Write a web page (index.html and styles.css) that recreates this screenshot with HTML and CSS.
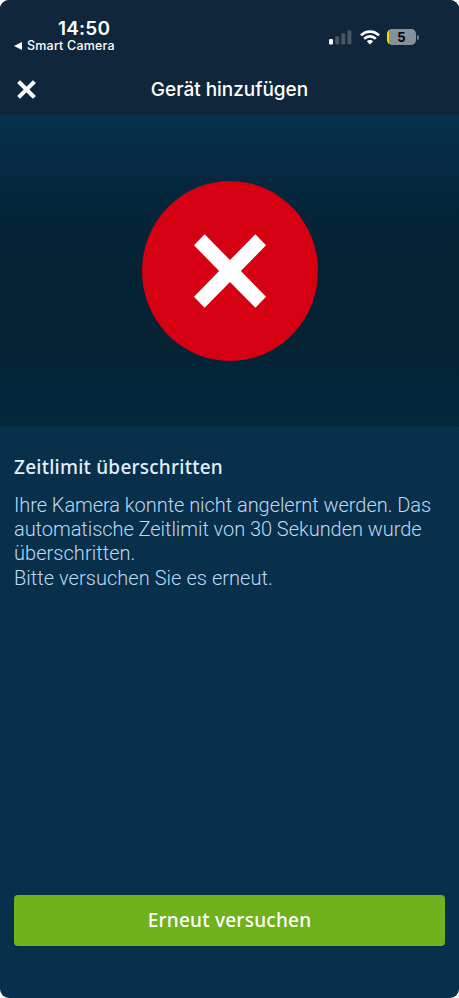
FILE: index.html
```html
<!DOCTYPE html>
<html lang="de">
<head>
<meta charset="utf-8">
<meta name="viewport" content="width=device-width, initial-scale=1">
<title>Gerät hinzufügen</title>
<link rel="stylesheet" href="styles.css">
</head>
<body>
<div class="screen">
  <header class="top">
    <div class="status">
      <div class="status-left">
        <div class="time">14:50</div>
        <div class="back">
          <svg class="back-arrow" viewBox="0 0 8 8"><path d="M0 4 8 0v8z" fill="#fff"/></svg>
          <span>Smart Camera</span>
        </div>
      </div>
      <div class="status-right">
        <svg class="signal" viewBox="0 0 23 15">
          <rect x="0" y="9" width="4" height="5.5" rx="1.2" fill="#fff"/>
          <rect x="6.2" y="6.2" width="4" height="8.3" rx="1.2" fill="#465766"/>
          <rect x="12.3" y="3.2" width="4" height="11.3" rx="1.2" fill="#465766"/>
          <rect x="18.4" y="0.3" width="4" height="14.2" rx="1.2" fill="#465766"/>
        </svg>
        <svg class="wifi" viewBox="0 0 20 15">
          <g fill="none" stroke="#fff" stroke-width="2.7">
            <path d="M1 5.4C6 .3 14 .3 19 5.4"/>
            <path d="M4.2 8.9c3.3-3.3 8.3-3.3 11.6 0"/>
          </g>
          <path d="M10 14.4 6.8 11.3c1.8-1.7 4.6-1.7 6.4 0z" fill="#fff"/>
        </svg>
        <div class="battery"><span>5</span></div>
        <div class="battery-tip"></div>
      </div>
    </div>
    <div class="nav">
      <svg class="close" viewBox="0 0 17 17"><path d="M2 2l13 13M15 2l-13 13" stroke="#fff" stroke-width="4" stroke-linecap="square"/></svg>
      <h1>Gerät hinzufügen</h1>
    </div>
  </header>
  <section class="hero">
    <svg class="error" viewBox="0 0 176 180">
      <ellipse cx="88" cy="90" rx="88" ry="90" fill="#d50012"/>
      <path d="M62.6 53.3 88 79.1l25.4-25.8 10.6 11L98.9 90l25.1 25.8-10.6 11L88 101l-25.4 25.8-10.6-11L77.1 90 52 64.3z" fill="#fff"/>
    </svg>
  </section>
  <main class="content">
    <h2>Zeitlimit überschritten</h2>
    <p>
      <span class="line">Ihre Kamera konnte nicht angelernt werden. Das</span>
      <span class="line">automatische Zeitlimit von 30 Sekunden wurde</span>
      <span class="line loose">überschritten.</span>
      <span class="line loose">Bitte versuchen Sie es erneut.</span>
    </p>
  </main>
  <button class="retry">Erneut versuchen</button>
</div>
</body>
</html>
```
FILE: styles.css
```css
* { box-sizing: border-box; }
body { margin: 0; background: #fff; font-family: "Noto Sans", sans-serif; }
.screen { height: 998px; display: flex; flex-direction: column; overflow: hidden; border-radius: 9px; background: #08304b; color: #fff; }
.top { height: 115px; background: #10273b; font-family: Inter, sans-serif; }
.status { height: 64px; display: flex; justify-content: space-between; padding: 18px 40px 0 14px; }
.time { margin-left: 44px; font-size: 19px; line-height: 22px; font-weight: 600; letter-spacing: 0.2px; }
.back { display: flex; align-items: center; gap: 5px; height: 11px; font-size: 12.5px; line-height: 11px; font-weight: 500; letter-spacing: 0.2px; white-space: nowrap; }
.back-arrow { width: 8px; height: 8px; }
.status-right { display: flex; align-items: center; height: 38px; }
.signal { width: 23px; height: 15px; margin-right: 8px; }
.wifi { width: 20px; height: 15px; margin-right: 7px; }
.battery { width: 29px; height: 16px; border-radius: 5px; background: linear-gradient(90deg, #fbd60a 2px, #87919b 2px); color: #000; font-size: 13px; line-height: 16px; font-weight: 700; text-align: center; }
.battery-tip { width: 2px; height: 5px; margin-left: 1px; border-radius: 0 2px 2px 0; background: #71808c; }
.nav { display: grid; grid-template-columns: 17px 1fr 17px; align-items: center; height: 51px; padding: 0 18px; }
.close { width: 17px; height: 17px; overflow: visible; }
h1 { margin: 0; text-align: center; font-size: 19px; line-height: 24px; font-weight: 500; letter-spacing: -0.02px; }
.hero { height: 312px; display: flex; justify-content: center; padding-top: 66px; background: linear-gradient(#08314c 0%, #062a42 15%, #042437 34%, #042233 55%, #042335 75%, #05283f 100%); }
.error { width: 176px; height: 180px; }
.content { flex: 1; padding: 28px 14px 0; }
h2 { margin: 0; font-size: 19px; line-height: 24px; font-weight: 500; letter-spacing: 0.24px; color: #e1effc; }
p { margin: 14px 0 0; font-family: Roboto, sans-serif; font-size: 20px; line-height: 24.2px; font-weight: 300; letter-spacing: -0.05px; color: #bfd8f3; white-space: nowrap; }
.line { display: block; }
.loose { letter-spacing: 0.04px; }
.retry { flex: none; height: 51px; margin: 0 14px 52px; padding: 0; border: 0; border-radius: 4px; background: #70b11e; color: #fff; font: 500 19px/51px "Noto Sans", sans-serif; letter-spacing: 0.25px; }
```
